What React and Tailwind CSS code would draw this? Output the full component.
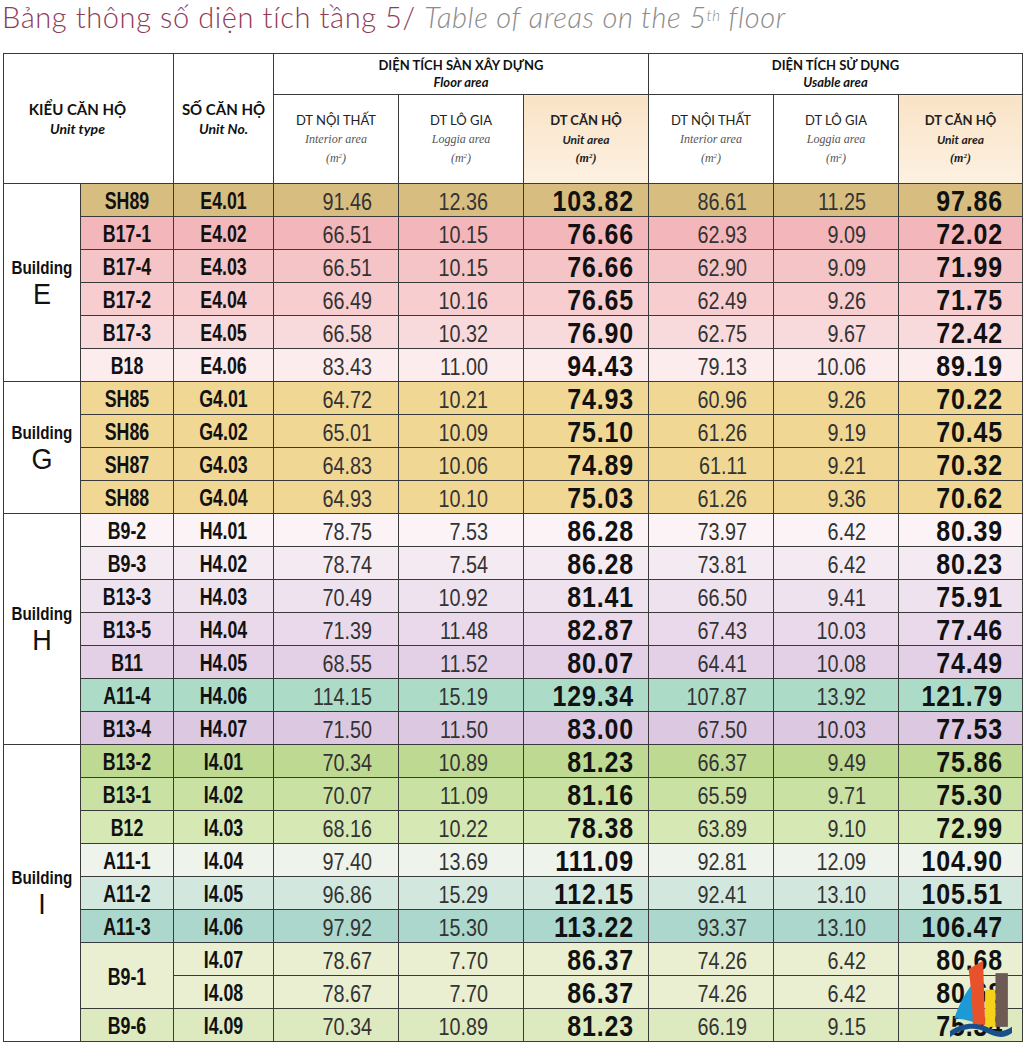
const NUM = { fontFamily: '"Liberation Sans", Arial, sans-serif' };

const sections = [
  {
    name: "E",
    rows: [
      ["SH89", "E4.01", "91.46", "12.36", "103.82", "86.61", "11.25", "97.86", "bg-[#d8bd80]"],
      ["B17-1", "E4.02", "66.51", "10.15", "76.66", "62.93", "9.09", "72.02", "bg-[#f3b7bb]"],
      ["B17-4", "E4.03", "66.51", "10.15", "76.66", "62.90", "9.09", "71.99", "bg-[#f5c4c7]"],
      ["B17-2", "E4.04", "66.49", "10.16", "76.65", "62.49", "9.26", "71.75", "bg-[#f7cdd0]"],
      ["B17-3", "E4.05", "66.58", "10.32", "76.90", "62.75", "9.67", "72.42", "bg-[#f9dadc]"],
      ["B18", "E4.06", "83.43", "11.00", "94.43", "79.13", "10.06", "89.19", "bg-[#fcecee]"],
    ],
  },
  {
    name: "G",
    rows: [
      ["SH85", "G4.01", "64.72", "10.21", "74.93", "60.96", "9.26", "70.22", "bg-[#f0d894]"],
      ["SH86", "G4.02", "65.01", "10.09", "75.10", "61.26", "9.19", "70.45", "bg-[#f0d894]"],
      ["SH87", "G4.03", "64.83", "10.06", "74.89", "61.11", "9.21", "70.32", "bg-[#f0d894]"],
      ["SH88", "G4.04", "64.93", "10.10", "75.03", "61.26", "9.36", "70.62", "bg-[#f0d894]"],
    ],
  },
  {
    name: "H",
    rows: [
      ["B9-2", "H4.01", "78.75", "7.53", "86.28", "73.97", "6.42", "80.39", "bg-[#fbf3f6]"],
      ["B9-3", "H4.02", "78.74", "7.54", "86.28", "73.81", "6.42", "80.23", "bg-[#f4eaf2]"],
      ["B13-3", "H4.03", "70.49", "10.92", "81.41", "66.50", "9.41", "75.91", "bg-[#efe2ef]"],
      ["B13-5", "H4.04", "71.39", "11.48", "82.87", "67.43", "10.03", "77.46", "bg-[#e9d9eb]"],
      ["B11", "H4.05", "68.55", "11.52", "80.07", "64.41", "10.08", "74.49", "bg-[#e3d0e6]"],
      ["A11-4", "H4.06", "114.15", "15.19", "129.34", "107.87", "13.92", "121.79", "bg-[#acdcc8]"],
      ["B13-4", "H4.07", "71.50", "11.50", "83.00", "67.50", "10.03", "77.53", "bg-[#dcc9e1]"],
    ],
  },
  {
    name: "I",
    rows: [
      ["B13-2", "I4.01", "70.34", "10.89", "81.23", "66.37", "9.49", "75.86", "bg-[#bdd992]"],
      ["B13-1", "I4.02", "70.07", "11.09", "81.16", "65.59", "9.71", "75.30", "bg-[#c9e1a3]"],
      ["B12", "I4.03", "68.16", "10.22", "78.38", "63.89", "9.10", "72.99", "bg-[#d6e8b4]"],
      ["A11-1", "I4.04", "97.40", "13.69", "111.09", "92.81", "12.09", "104.90", "bg-[#eef3ec]"],
      ["A11-2", "I4.05", "96.86", "15.29", "112.15", "92.41", "13.10", "105.51", "bg-[#d2e8df]"],
      ["A11-3", "I4.06", "97.92", "15.30", "113.22", "93.37", "13.10", "106.47", "bg-[#acd7cc]"],
      ["B9-1", "I4.07", "78.67", "7.70", "86.37", "74.26", "6.42", "80.68", "bg-[#e9efd0]", 2],
      [null, "I4.08", "78.67", "7.70", "86.37", "74.26", "6.42", "80.68", "bg-[#e9efd0]"],
      ["B9-6", "I4.09", "70.34", "10.89", "81.23", "66.19", "9.15", "75.34", "bg-[#dde9bf]"],
    ],
  },
];

const cell = "border border-[#3a3a3a]";

// condensed look: the page has no narrow face, so squeeze horizontally
function Light({ v, pr }) {
  return (
    <td className={`${cell} ${pr} h-[33px] p-0 pt-[3px]`}>
      <div className="origin-right scale-x-[0.86] text-right text-[23px] leading-[28px] text-[#333]">{v}</div>
    </td>
  );
}

function Big({ v, pr }) {
  return (
    <td className={`${cell} ${pr} h-[33px] p-0 pt-[2px]`}>
      <div className="origin-right scale-x-[0.86] text-right text-[29px] font-bold leading-[29px] tracking-[1px] text-[#111]">{v}</div>
    </td>
  );
}

function Code({ v, rowSpan }) {
  return (
    <td rowSpan={rowSpan} className={`${cell} h-[33px] p-0 pt-[2px]`}>
      <div className="scale-x-[0.74] text-center text-[24px] font-bold leading-[28px] text-[#111]">{v}</div>
    </td>
  );
}

function SubHead({ title, en, bold, tint }) {
  return (
    <th
      className={`${cell} align-middle font-normal ${tint ? "bg-gradient-to-b from-[#f9e3c6] to-[#fdf1e2]" : "bg-white"}`}
    >
      <div className={`text-[13px] leading-[19px] text-[#222] ${bold ? "font-bold" : ""}`} style={{ fontFamily: "Lato, sans-serif" }}>
        {title}
      </div>
      <div
        className={`text-[12px] leading-[19px] italic ${bold ? "font-bold text-[#222]" : "text-[#555]"}`}
        style={{ fontFamily: bold ? "Lato, sans-serif" : '"Liberation Serif", serif' }}
      >
        {en}
      </div>
      <div
        className={`text-[12px] leading-[19px] italic ${bold ? "font-bold text-[#222]" : "text-[#555]"}`}
        style={{ fontFamily: '"Liberation Serif", serif' }}
      >
        (m<sup className="text-[7px]">2</sup>)
      </div>
    </th>
  );
}

function Logo() {
  return (
    <svg viewBox="0 0 60 80" className="pointer-events-none absolute left-[950px] top-[958px] h-[84px] w-[62px]">
      <path d="M4 58 C10 40 20 24 30 16 L30 64 C20 60 10 58 4 58 Z" fill="#1b9ad6" />
      <path d="M18 10 L32 2 L34 64 L22 64 C22 44 20 26 18 10 Z" fill="#e8522a" />
      <rect x="34" y="30" width="10" height="36" fill="#f4d21b" />
      <rect x="44" y="14" width="12" height="52" fill="#6d5a55" />
      <path d="M0 70 C14 60 28 62 40 68 C48 72 54 70 60 66 L60 72 C52 78 44 76 36 72 C26 66 14 66 0 76 Z" fill="#1b4f8c" />
    </svg>
  );
}

export default function App() {
  return (
    <div className="relative h-[1045px] w-[1024px] overflow-hidden bg-white">
      <h1
        className="ml-[2px] h-[32px] pt-[1px] text-[29px] font-light leading-[31px] tracking-[0.6px] whitespace-nowrap"
        style={{ fontFamily: "Lato, sans-serif" }}
      >
        <span className="text-[#8e3b56]">Bảng thông số diện tích tầng 5/ </span>
        <span className="italic text-[#8c8c8c]">
          Table of areas on the 5<sup className="text-[15px]">th</sup> floor
        </span>
      </h1>

      <table className="ml-[3px] mt-[21px] table-fixed border-collapse">
        <colgroup>
          <col className="w-[73px]" />
          <col className="w-[93px]" />
          <col className="w-[100px]" />
          <col className="w-[125px]" />
          <col className="w-[125px]" />
          <col className="w-[125px]" />
          <col className="w-[125px]" />
          <col className="w-[125px]" />
          <col className="w-[124px]" />
        </colgroup>
        <thead style={{ fontFamily: "Lato, sans-serif" }}>
          <tr className="h-[41px]">
            <th rowSpan={2} colSpan={2} className={`${cell} bg-white pr-[22px] text-[#111]`}>
              <div className="text-[15px] font-bold leading-[20px]">KIỂU CĂN HỘ</div>
              <div className="text-[14px] font-bold italic leading-[20px]">Unit type</div>
            </th>
            <th rowSpan={2} className={`${cell} bg-white text-[#111]`}>
              <div className="text-[15px] font-bold leading-[20px]">SỐ CĂN HỘ</div>
              <div className="text-[14px] font-bold italic leading-[20px]">Unit No.</div>
            </th>
            <th colSpan={3} className={`${cell} bg-white text-[#111]`}>
              <div className="text-[13px] font-bold leading-[17px]">DIỆN TÍCH SÀN XÂY DỰNG</div>
              <div className="text-[13px] font-bold italic leading-[17px]">Floor area</div>
            </th>
            <th colSpan={3} className={`${cell} bg-white text-[#111]`}>
              <div className="text-[13px] font-bold leading-[17px]">DIỆN TÍCH SỬ DỤNG</div>
              <div className="text-[13px] font-bold italic leading-[17px]">Usable area</div>
            </th>
          </tr>
          <tr className="h-[89px]">
            <SubHead title="DT NỘI THẤT" en="Interior area" />
            <SubHead title="DT LÔ GIA" en="Loggia area" />
            <SubHead title="DT CĂN HỘ" en="Unit area" bold tint />
            <SubHead title="DT NỘI THẤT" en="Interior area" />
            <SubHead title="DT LÔ GIA" en="Loggia area" />
            <SubHead title="DT CĂN HỘ" en="Unit area" bold tint />
          </tr>
        </thead>
        <tbody style={NUM}>
          {sections.map((sec) =>
            sec.rows.map((r, i) => (
              <tr key={r[1]} className={r[8]}>
                {i === 0 && (
                  <td rowSpan={sec.rows.length} className={`${cell} bg-white text-center align-middle text-[#111]`}>
                    <div className="scale-x-[0.8] text-[19px] font-bold leading-[22px]">Building</div>
                    <div className="scale-x-[0.9] text-[30px] leading-[30px]">{sec.name}</div>
                  </td>
                )}
                {r[0] !== null && <Code v={r[0]} rowSpan={r[9] || 1} />}
                <Code v={r[1]} />
                <Light v={r[2]} pr="pr-[26px]" />
                <Light v={r[3]} pr="pr-[35px]" />
                <Big v={r[4]} pr="pr-[14px]" />
                <Light v={r[5]} pr="pr-[26px]" />
                <Light v={r[6]} pr="pr-[32px]" />
                <Big v={r[7]} pr="pr-[19px]" />
              </tr>
            ))
          )}
        </tbody>
      </table>
      <Logo />
    </div>
  );
}
